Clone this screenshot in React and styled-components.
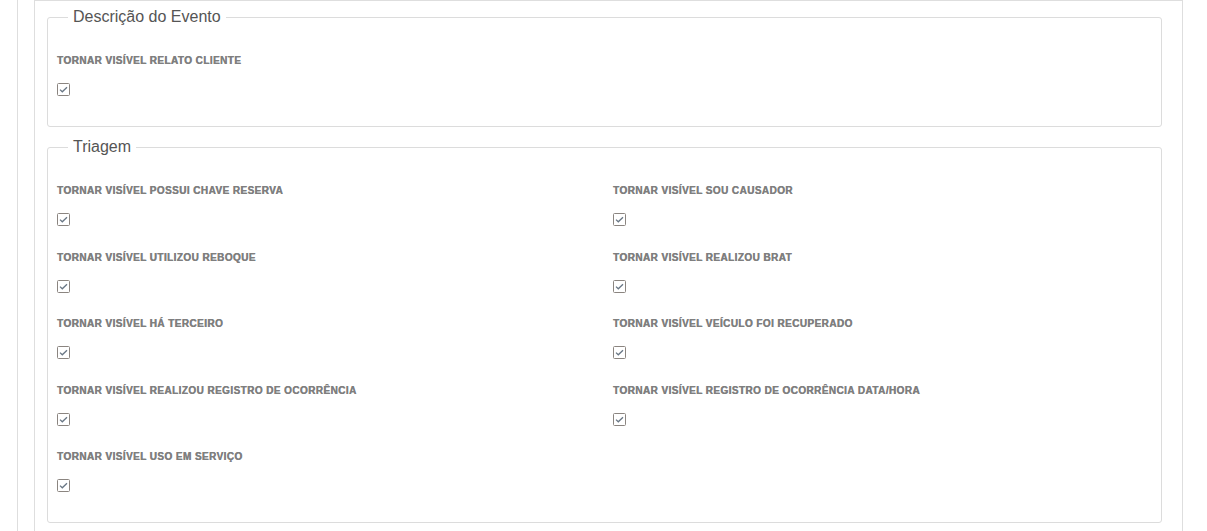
import styled, { createGlobalStyle } from "styled-components";

const GlobalStyle = createGlobalStyle`
  html, body {
    margin: 0;
    padding: 0;
    background: #fff;
    overflow: hidden;
  }
  body {
    font-family: "Liberation Sans", Arial, sans-serif;
  }
`;

const Outer = styled.div`
  margin-left: 17px;
  height: 100vh;
  box-sizing: border-box;
  border-left: 1px solid #dedede;
  padding-left: 16px;
  overflow: hidden;
`;

const Panel = styled.div`
  width: 1149px;
  height: 100%;
  border-top: 1px solid #dedede;
  border-left: 1px solid #dedede;
  border-right: 1px solid #dedede;
  padding: 7px 0 0 12px;
  box-sizing: border-box;
`;

const Fieldset = styled.fieldset`
  width: 1115px;
  box-sizing: border-box;
  margin: 0 0 11px 0;
  padding: 0 9px 30px 9px;
  border: 1px solid #dcdcdc;
  border-radius: 3px;
  min-width: 0;
`;

const Legend = styled.legend`
  margin-left: 11px;
  padding: 0 5px;
  font-size: 16px;
  line-height: 18px;
  color: #555;
`;

const Grid = styled.div`
  display: grid;
  grid-template-columns: ${(p) => (p.$cols === 2 ? "556px 1fr" : "1fr")};
  row-gap: 24.5px;
  padding-top: 28px;
`;

const Item = styled.div`
  display: flex;
  flex-direction: column;
  align-items: flex-start;
`;

const Label = styled.label`
  display: block;
  font-size: 10px;
  line-height: 14px;
  font-weight: 700;
  letter-spacing: 0.42px;
  text-transform: uppercase;
  color: #7f7f7f;
  text-shadow: 0.35px 0 0 #7f7f7f;
  margin-bottom: 15px;
`;

const Box = styled.svg`
  display: block;
  width: 13px;
  height: 13px;
`;

function CheckBox() {
  return (
    <Box viewBox="0 0 13 13">
      <rect x="0.5" y="0.5" width="12" height="12" rx="1" fill="#fff" stroke="#8b8580" />
      <path d="M3 6.6 L5.3 8.8 L10 4.2" fill="none" stroke="#687684" strokeWidth="1.3" />
    </Box>
  );
}

function Field({ label }) {
  return (
    <Item>
      <Label>{label}</Label>
      <CheckBox />
    </Item>
  );
}

const triagem = [
  "Tornar visível possui chave reserva",
  "Tornar visível sou causador",
  "Tornar visível utilizou reboque",
  "Tornar visível realizou BRAT",
  "Tornar visível há terceiro",
  "Tornar visível veículo foi recuperado",
  "Tornar visível realizou registro de ocorrência",
  "Tornar visível registro de ocorrência data/hora",
  "Tornar visível uso em serviço",
];

export default function App() {
  return (
    <>
      <GlobalStyle />
      <Outer>
        <Panel>
          <Fieldset>
            <Legend>Descrição do Evento</Legend>
            <Grid>
              <Field label="Tornar visível relato cliente" />
            </Grid>
          </Fieldset>
          <Fieldset>
            <Legend>Triagem</Legend>
            <Grid $cols={2}>
              {triagem.map((t) => (
                <Field key={t} label={t} />
              ))}
            </Grid>
          </Fieldset>
        </Panel>
      </Outer>
    </>
  );
}
